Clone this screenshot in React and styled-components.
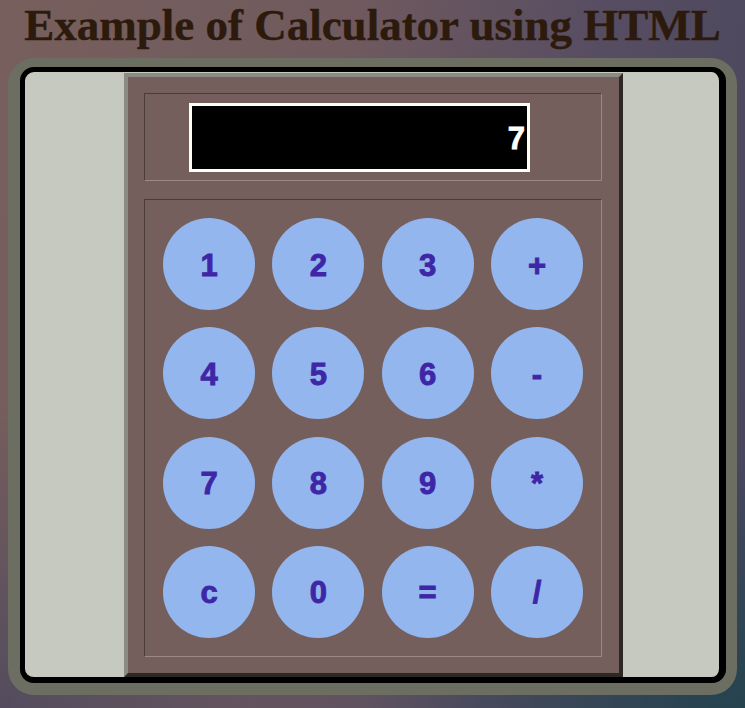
import React from "react";
import styled, { createGlobalStyle } from "styled-components";

const GlobalStyle = createGlobalStyle`
  html, body {
    margin: 0;
    padding: 0;
  }
  body {
    min-height: 708px;
    background:
      radial-gradient(ellipse 380px 260px at 100% 100%, #25434f 0%, rgba(37, 67, 79, 0) 100%),
      radial-gradient(ellipse 420px 300px at 0% 100%, rgba(80, 74, 94, 0.9) 0%, rgba(80, 74, 94, 0) 100%),
      linear-gradient(100deg, #775f5c 0%, #705a5e 40%, #574d62 70%, #47465c 100%);
    font-family: "Liberation Serif", serif;
  }
  * {
    box-sizing: border-box;
  }
`;

const Page = styled.div`
  padding: 0 8px 12px;
`;

const Title = styled.h1`
  margin: 0;
  height: 50px;
  line-height: 50px;
  text-align: center;
  font-family: "Liberation Serif", "Times New Roman", serif;
  font-size: 45px;
  font-weight: bold;
  color: #2c1a0d;
  white-space: nowrap;
  -webkit-text-stroke: 0.4px #2c1a0d;
`;

const Frame = styled.div`
  margin-top: 8px;
  border-style: solid;
  border-color: #6b6e61;
  border-width: 9px 11px 12px 12px;
  border-radius: 26px;
`;

const Bezel = styled.div`
  border-style: solid;
  border-color: #000;
  border-width: 5px 7px 6px 5px;
  border-radius: 14px;
  background: #c6c9bf;
  display: flex;
  justify-content: center;
  padding: 1px 0 0 3px;
`;

const Body = styled.div`
  width: 499px;
  padding: 16px 17px 16px 16px;
  background: #755f5d;
  border-style: solid;
  border-width: 4px;
  border-color: #8b8b81 #2c2924 #2c2924 #8b8b81;
  display: flex;
  flex-direction: column;
  gap: 18px;
`;

const Cell = styled.div`
  border: 1px solid;
  border-color: #4a3a38 #9c8783 #9c8783 #4a3a38;
`;

const DisplayCell = styled(Cell)`
  height: 88px;
  padding: 9px 0 0 44px;
`;

const Screen = styled.div`
  width: 341px;
  height: 69px;
  border: 3px solid #fffdf6;
  background: #000;
  color: #fff;
  font-family: "Liberation Sans", Arial, sans-serif;
  font-weight: bold;
  font-size: 31px;
  -webkit-text-stroke: 0.8px #fff;
  display: flex;
  align-items: center;
  justify-content: flex-end;
  padding: 2px 2px 0 0;
`;

const Keypad = styled(Cell)`
  height: 458px;
  display: grid;
  grid-template-columns: repeat(4, 92px);
  grid-auto-rows: 92px;
  gap: 17.3px;
  justify-content: center;
  align-content: center;
`;

const Key = styled.button`
  width: 92px;
  height: 92px;
  border: none;
  border-radius: 50%;
  background: #93b6ee;
  color: #3e26a7;
  font-family: "Liberation Sans", Arial, sans-serif;
  font-weight: bold;
  font-size: 31px;
  -webkit-text-stroke: 0.9px #3e26a7;
  padding: 3px 0 0;
  cursor: pointer;
  display: flex;
  align-items: center;
  justify-content: center;
`;

const keys = ["1", "2", "3", "+", "4", "5", "6", "-", "7", "8", "9", "*", "c", "0", "=", "/"];

const App = () => (
  <>
    <GlobalStyle />
    <Page>
      <Title>Example of Calculator using HTML</Title>
      <Frame>
        <Bezel>
          <Body>
            <DisplayCell>
              <Screen>7</Screen>
            </DisplayCell>
            <Keypad>
              {keys.map((k) => (
                <Key key={k}>{k}</Key>
              ))}
            </Keypad>
          </Body>
        </Bezel>
      </Frame>
    </Page>
  </>
);

export default App;
